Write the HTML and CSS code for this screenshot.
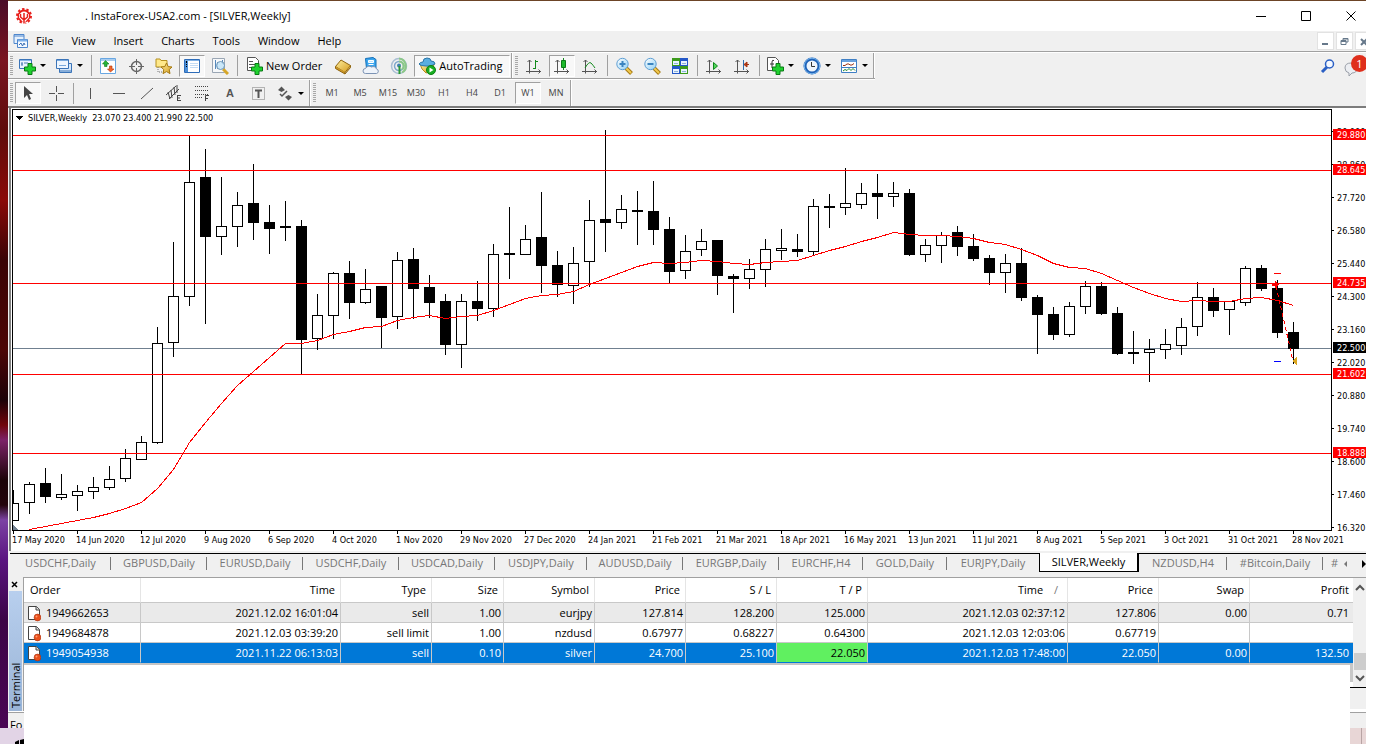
FILE: index.html
```html
<!DOCTYPE html>
<html lang="en">
<head>
<meta charset="utf-8">
<title>InstaForex-USA2.com - [SILVER,Weekly]</title>
<link rel="stylesheet" href="styles.css">
</head>
<body>
<svg class="defs" aria-hidden="true">
  <defs>
    <linearGradient id="gold" x1="0" y1="0" x2="1" y2="1"><stop offset="0" stop-color="#fff0a0"/><stop offset="1" stop-color="#d39a1c"/></linearGradient>
    <linearGradient id="lens" x1="0" y1="0" x2="1" y2="1"><stop offset="0" stop-color="#fff"/><stop offset="1" stop-color="#8fd0f5"/></linearGradient>
    <symbol id="plus" viewBox="0 0 12 12"><path d="M4 .5h4V4h3.500v4H8v3.500H4V8H.5V4H4z" fill="#1fd12f" stroke="#087a14"/></symbol>
    <symbol id="doc" viewBox="0 0 14 17"><path d="M1.500 1.500h8l3 3v10h-11z" fill="#fff" stroke="#444"/><path d="M9 1.500V5h3.500" fill="#ddd" stroke="#444"/><circle cx="10.500" cy="12.500" r="3.400" fill="#e8501c" stroke="#a82c08" stroke-width=".6"/><circle cx="9.500" cy="11.500" r="1" fill="#ff9a70"/></symbol>
    <symbol id="axes" viewBox="0 0 18 18"><path d="M4.500 3v13.500M1 14.500h15M2.500 5l2-2 2 2M13.500 12.500l2 2-2 2" fill="none" stroke="#555"/></symbol>
  </defs>
</svg>
<div class="desktop">
  <div class="wallpaper"></div>
  <main class="window">
    <header class="titlebar">
      <svg class="logo" width="16" height="16" viewBox="0 0 16 16"><g fill="none" stroke="#e8201c"><circle cx="8" cy="8" r="5.500" stroke-width="2"/><circle cx="8" cy="8" r="7" stroke-width="2" stroke-dasharray="2.400 2"/></g><path d="M8 16V5M8 13L4.500 9V6M8 13l3.500-4V6" fill="none" stroke="#fff" stroke-width="3"/><path d="M8 15.500V5M8 12L4.500 9V6M8 12l3.500-3V6" fill="none" stroke="#e8201c" stroke-width="1.500"/></svg>
      <h1 class="title">. InstaForex-USA2.com - [SILVER,Weekly]</h1>
      <div class="caption">
        <button class="cap" aria-label="Minimize"><svg width="11" height="11"><path d="M0 5.500h10" stroke="#000"/></svg></button>
        <button class="cap" aria-label="Maximize"><svg width="11" height="11"><path d="M.5.5h9v9h-9z" fill="none" stroke="#000"/></svg></button>
        <button class="cap" aria-label="Close"><svg width="11" height="11"><path d="M.5.5l9 9M9.500.5l-9 9" stroke="#000"/></svg></button>
      </div>
    </header>
    <nav class="menubar">
      <svg class="menu-icon" width="16" height="16" viewBox="0 0 16 16"><path d="M1 1.500h10v9H1zM1 3h10" fill="#e6f1fd" stroke="#4e86cc"/><path d="M4.500 6.500h10v8h-10z" fill="#f4f9ff" stroke="#4e86cc"/><path d="M5 7.500h9" stroke="#7db0ea" stroke-width="2"/><path d="M6 12l2-2 1.500 3 1.500-3 1 2" fill="none" stroke="#3a6fb5"/></svg>
      <button>File</button><button>View</button><button>Insert</button><button>Charts</button><button>Tools</button><button>Window</button><button>Help</button>
      <div class="mdi">
        <button aria-label="Minimize chart"><svg width="9" height="9"><path d="M1 7h6" stroke="#66788a" stroke-width="2"/></svg></button>
        <button aria-label="Restore chart"><svg width="9" height="9"><path d="M3 3V1.500h5v3.500H6M1 3.500h5v4H1zM1 4.500h5M3 2h5" fill="none" stroke="#66788a"/></svg></button>
        <button class="cut" aria-label="Close chart"><svg width="9" height="9"><path d="M1 2l6 6M7 2L1 8" stroke="#66788a" stroke-width="2"/></svg></button>
      </div>
    </nav>
    <div class="toolbars">
      <div class="bar">
        <i class="grip"></i>
        <button class="tool drop" aria-label="New chart"><svg width="18" height="18"><path d="M1.500 2.500h12v9h-12z" fill="#eaf4ff" stroke="#3b74b8"/><path d="M2 3.500h11" stroke="#8ab6e6"/><path d="M4 5v4M3 7h2M6 6h4" stroke="#4a7ab0"/><use href="#plus" x="6" y="6" width="12" height="12"/></svg></button>
        <button class="tool drop" aria-label="Profiles"><svg width="18" height="18"><path d="M4.500 6.500h12v9h-12z" fill="#d5e8fb" stroke="#3b74b8"/><path d="M1.500 2.500h12v9h-12z" fill="#eef6ff" stroke="#3b74b8"/><path d="M2 3.500h11M4 8.500h7" stroke="#7aaade"/><path d="M5 14h11" stroke="#3b74b8"/></svg></button>
        <i class="sep"></i>
        <button class="tool" aria-label="Market watch"><svg width="18" height="18"><path d="M1.500 1.500h15v15h-15z" fill="#fff" stroke="#69a7e2"/><path d="M2 3h14" stroke="#a9cdf0" stroke-width="2"/><path d="M6.500 3.500L3.500 7h2v2.500h2.500V7h2z" fill="#28b43a" stroke="#0b7a1a" stroke-width=".6"/><path d="M11.500 15L8.500 12h2V9h2.500v3h2z" fill="#f2672c" stroke="#b33408" stroke-width=".6"/></svg></button>
        <button class="tool" aria-label="Data window"><svg width="18" height="18"><circle cx="9.500" cy="9.500" r="5" fill="none" stroke="#666" stroke-width="1.500"/><path d="M9.500 2v6M9.500 11v6M2 9.500h6M11 9.500h6" stroke="#666"/></svg></button>
        <button class="tool" aria-label="Navigator"><svg width="18" height="18"><path d="M1 2h4l1 1.500h6V10H1z" fill="#ffe98a" stroke="#b59120"/><path d="M3 10v5h6" fill="none" stroke="#777" stroke-dasharray="1 1"/><path d="M11.500 6l1.700 3.600 3.800.4-2.800 2.600.8 4-3.500-2-3.500 2 .8-4L6 10l3.800-.4z" fill="url(#gold)" stroke="#a5780e"/></svg></button>
        <button class="tool pressed" aria-label="Terminal" aria-pressed="true"><svg width="18" height="18"><path d="M1.500 2.500h15v13h-15z" fill="#fff" stroke="#2d6cb8"/><path d="M2 3.500h14" stroke="#7fb0e4"/><path d="M2 4h3v11H2z" fill="#4c8fd8"/><path d="M3.500 4v2M3.500 7v1M3.500 9v1" stroke="#000"/><path d="M7 6.500h8M7 8.500h8M7 10.500h8" stroke="#c4dcf4"/></svg></button>
        <button class="tool" aria-label="Strategy tester"><svg width="18" height="18"><path d="M1.500 1.500h12v14h-12z" fill="#f6f8fa" stroke="#9aa6b4"/><path d="M4.500 3v9M6.500 5v7M11.500 3v4" stroke="#5588bb"/><path d="M12 12l5 5" stroke="#d6a628" stroke-width="3"/><circle cx="9.500" cy="8.500" r="4" fill="#bfe2f7" fill-opacity=".8" stroke="#7096b6"/></svg></button>
        <i class="sep"></i>
        <button class="tool labelled"><svg width="18" height="18"><path d="M2.500.5h8l3 3v10h-11z" fill="#fff" stroke="#555"/><path d="M4 4.500h4M4 7.500h7M4 10.500h5" stroke="#555"/><use href="#plus" x="6" y="6" width="12" height="12"/></svg>New Order</button>
        <button class="tool" aria-label="MetaEditor"><svg width="18" height="18"><path d="M1.500 9.500L7 3l9.500 5.500L11 15.500z" fill="url(#gold)" stroke="#8f6510"/><path d="M1.500 9.500v2L11 17v-2M11 17l5.500-6.500v-2" fill="#d09a28" stroke="#8f6510"/></svg></button>
        <button class="tool" aria-label="Virtual hosting"><svg width="18" height="18"><path d="M3.500 1.500L11 .5l3 2v9H4.500z" fill="#3aa5ee" stroke="#1470b8"/><path d="M6.500 3.500h5v2h-5zM6.500 7.500h5" fill="#bfe4fb" stroke="#fff"/><path d="M3.500 16.500a2.500 2.500 0 010-5 4 4 0 016-1.500 3.500 3.500 0 015 2 2.300 2.300 0 010 4.500z" fill="#eef3fa" stroke="#7c93b4"/></svg></button>
        <button class="tool" aria-label="Signals"><svg width="18" height="18"><g fill="none"><circle cx="9" cy="9" r="7.500" stroke="#a9bfd4" stroke-width="1.500"/><circle cx="9" cy="9" r="4.500" stroke="#7fa8cc" stroke-width="1.500"/><path d="M9 1.500a7.500 7.500 0 013 14M9 4.500a4.500 4.500 0 013 8" stroke="#8cc888" stroke-width="2"/></g><circle cx="9" cy="8.500" r="2" fill="#3f81ac"/><path d="M9.500 9v8" stroke="#2c9a34" stroke-width="2"/></svg></button>
        <button class="tool labelled pressed" aria-pressed="true"><svg width="18" height="18"><path d="M2 7h14l-2 7-6 2-4-4z" fill="url(#gold)" stroke="#b78c1c"/><path d="M1 7q1-2 4-2 0-4 4-4t4 3q4 0 4 3-4 3-9 2Q2 9 1 7z" fill="#5aaee0" stroke="#2b76a8"/><circle cx="13" cy="13" r="4.500" fill="#19ae22" stroke="#0c8014"/><path d="M11.500 10.500l4 2.500-4 2.500z" fill="#fff"/></svg>AutoTrading</button>
        <i class="end"></i><i class="grip"></i>
        <button class="tool" aria-label="Bar chart"><svg width="18" height="18"><use href="#axes" width="18" height="18"/><path d="M10.500 3v9M8 11.500h2.500M10.500 4.500H13" stroke="#128a1c" fill="none"/></svg></button>
        <button class="tool pressed" aria-label="Candlesticks" aria-pressed="true"><svg width="18" height="18"><use href="#axes" width="18" height="18"/><path d="M10.500 1v12" stroke="#128a1c"/><path d="M8.500 3.500h4v7h-4z" fill="#1cb92a" stroke="#0b7a16"/></svg></button>
        <button class="tool" aria-label="Line chart"><svg width="18" height="18"><use href="#axes" width="18" height="18"/><path d="M4 11q4-7 6-5t4 5" stroke="#128a1c" fill="none"/></svg></button>
        <i class="sep"></i>
        <button class="tool" aria-label="Zoom in"><svg width="18" height="18"><path d="M11 11l5.500 5.500" stroke="#a87c14" stroke-width="4"/><path d="M11 11l5 5" stroke="#f2ca50" stroke-width="2"/><circle cx="7.500" cy="7" r="5.700" fill="url(#lens)" stroke="#5f9fd4"/><path d="M4.500 7h6M7.500 4v6" stroke="#3a84c0" stroke-width="2"/></svg></button>
        <button class="tool" aria-label="Zoom out"><svg width="18" height="18"><path d="M11 11l5.500 5.500" stroke="#a87c14" stroke-width="4"/><path d="M11 11l5 5" stroke="#f2ca50" stroke-width="2"/><circle cx="7.500" cy="7" r="5.700" fill="url(#lens)" stroke="#5f9fd4"/><path d="M4.500 7h6" stroke="#3a84c0" stroke-width="2"/></svg></button>
        <button class="tool" aria-label="Tile windows"><svg width="18" height="18"><path d="M1 1h8v8H1zM9 9h8v8H9z" fill="#3c9a1c"/><path d="M9 1h8v8H9zM1 9h8v8H1z" fill="#2458c8"/><path d="M2 4h6v4H2zM10 4h6v4h-6zM2 12h6v4H2zM10 12h6v4h-6z" fill="#e8f2ff"/><path d="M3 6.500h4M11 6.500h4M3 14.500h4M11 14.500h4" stroke="#8db4d8"/></svg></button>
        <i class="sep"></i>
        <button class="tool" aria-label="Auto scroll"><svg width="18" height="18"><use href="#axes" width="18" height="18"/><path d="M8.500 5.500l4 3.500-4 3.500z" fill="#52d45c" stroke="#0e8a1a"/></svg></button>
        <button class="tool" aria-label="Chart shift"><svg width="18" height="18"><use href="#axes" width="18" height="18"/><path d="M10.500 3v10" stroke="#2f6cab"/><path d="M16 7.500h-3M14 5l-3 2.500 3 2.500z" fill="#c43c14" stroke="#a03010"/></svg></button>
        <i class="sep"></i>
        <button class="tool drop" aria-label="Indicators"><svg width="18" height="18"><path d="M1.500.5h8l3 3v10h-11z" fill="#fff" stroke="#555"/><path d="M8 3.500q-2-1-2 1.500v6M4 7h4" fill="none" stroke="#333"/><use href="#plus" x="6" y="6" width="12" height="12"/></svg></button>
        <button class="tool drop" aria-label="Periods"><svg width="18" height="18"><circle cx="9" cy="9" r="7" fill="#eef4fb" stroke="#1f62b8" stroke-width="3"/><circle cx="9" cy="9" r="7.800" fill="none" stroke="#7ab6ec"/><path d="M8.500 5v4.500H12" fill="none" stroke="#333"/></svg></button>
        <button class="tool drop" aria-label="Templates"><svg width="18" height="18"><path d="M1.500 2.500h15v13h-15z" fill="#fff" stroke="#3f7fc4"/><path d="M2 4h14" stroke="#69a2de" stroke-width="2"/><path d="M3 8.500h2l2-1.500h2l1 1h2l2-1.500" fill="none" stroke="#9a3214"/><path d="M2 10.500h14" stroke="#3f7fc4"/><path d="M3 14l2-1.500 2 1 2-2 2 2 2-2 2 2" fill="none" stroke="#208a30"/></svg></button>
        <i class="end"></i>
      </div>
      <div class="bar">
        <i class="grip"></i>
        <button class="tool pressed" aria-label="Cursor" aria-pressed="true"><svg width="18" height="18"><path d="M5 2v12l3-3 2 5 2-1-2-5h4z" fill="#444"/></svg></button>
        <button class="tool" aria-label="Crosshair"><svg width="18" height="18"><path d="M9.500 2v6M9.500 11v6M2 9.500h6M11 9.500h6" stroke="#555"/></svg></button>
        <i class="sep"></i>
        <button class="tool" aria-label="Vertical line"><svg width="18" height="18"><path d="M9.500 4v11" stroke="#555"/></svg></button>
        <button class="tool" aria-label="Horizontal line"><svg width="18" height="18"><path d="M4 9.500h12" stroke="#555"/></svg></button>
        <button class="tool" aria-label="Trendline"><svg width="18" height="18"><path d="M4 15L16 4" stroke="#555"/></svg></button>
        <button class="tool" aria-label="Equidistant channel"><svg width="18" height="18"><path d="M1 11L11 2M4 15L14 5M3 8l2 7M6 6l1 8M9 3l1 8M12 1v8" stroke="#444"/><path d="M12.500 11.500v5M12 11.500h4M12 14h3M12 16.500h4" stroke="#444"/></svg></button>
        <button class="tool" aria-label="Fibonacci retracement"><svg width="18" height="18"><path d="M2 2.500h13M2 6.500h13M2 10.500h13M2 13.500h8" stroke="#444" stroke-dasharray="1 1"/><path d="M12.500 17v-5.500H16M12 14.500h3" fill="none" stroke="#444"/></svg></button>
        <button class="tool glyph">A</button>
        <button class="tool" aria-label="Text label"><svg width="18" height="18"><path d="M3.500 3.500h12v12h-12z" fill="none" stroke="#777" stroke-dasharray="1 1"/><path d="M6 6.500h7M9.500 6v8" stroke="#555" stroke-width="2"/></svg></button>
        <button class="tool drop" aria-label="Arrows"><svg width="18" height="18"><path d="M2 6l3.500-3.500L9 6 5.500 8zM9 13l3.500-2 3.500 2-3.500 3.500z" fill="#555"/><path d="M4 10l2 2 5-5" fill="none" stroke="#555" stroke-width="1.500"/></svg></button>
        <i class="end"></i><i class="grip"></i>
        <button class="tool tf">M1</button><button class="tool tf">M5</button><button class="tool tf">M15</button><button class="tool tf">M30</button><button class="tool tf">H1</button><button class="tool tf">H4</button><button class="tool tf">D1</button><button class="tool tf pressed" aria-pressed="true">W1</button><button class="tool tf">MN</button>
        <i class="end"></i>
      </div>
      <div class="notify">
        <button aria-label="Search"><svg width="16" height="16"><path d="M7 9l-5 5" stroke="#2a5fc4" stroke-width="3"/><circle cx="9.500" cy="6" r="4" fill="#f4f8ff" stroke="#2a5fc4" stroke-width="1.500"/></svg></button>
        <button class="chat" aria-label="Messages"><svg width="22" height="22"><path d="M1 13q0-5 6-5t6 5-5 5l-3 3v-3q-4-1-4-5z" fill="#eceef2" stroke="#9a9fa8"/></svg><span class="badge">1</span></button>
      </div>
    </div>
    <section class="chart" aria-label="SILVER weekly chart">
      <svg class="plot" id="plot" height="422"></svg>
      <svg class="prices" id="prices" height="422"></svg>
      <svg class="times" id="times" height="20"></svg>
    </section>
    <nav class="tabs">
      <button class="w100">USDCHF,Daily</button><button class="w96">GBPUSD,Daily</button><button class="w96">EURUSD,Daily</button><button class="w96">USDCHF,Daily</button><button class="w96">USDCAD,Daily</button><button class="w92">USDJPY,Daily</button><button class="w96">AUDUSD,Daily</button><button class="w96">EURGBP,Daily</button><button class="w84">EURCHF,H4</button><button class="w84">GOLD,Daily</button><button class="w92 last">EURJPY,Daily</button><button class="w100 active">SILVER,Weekly</button><button class="w88">NZDUSD,H4</button><button class="w96">#Bitcoin,Daily</button><button class="more">#</button>
      <span class="scroll"><button aria-label="Previous tabs"><svg width="5" height="8"><path d="M4 1v6L1 4z" fill="#777"/></svg></button><button aria-label="Next tabs"><svg width="5" height="8"><path d="M1 0v8l4-4z" fill="#000"/></svg></button></span>
    </nav>
    <section class="terminal">
      <aside class="side">
        <button class="side-close" aria-label="Close terminal"><svg width="8" height="8"><path d="M1 1l5 5M6 1L1 6" stroke="#000" stroke-width="1.500"/></svg></button>
        <span class="side-label">Terminal</span>
      </aside>
      <div class="orders">
        <table>
          <colgroup><col class="c-order"><col><col class="c-mid"><col class="c-size"><col class="c-mid"><col class="c-mid"><col class="c-mid"><col class="c-mid"><col><col class="c-mid"><col class="c-mid"><col class="c-profit"></colgroup>
          <thead><tr><th class="first">Order</th><th>Time</th><th>Type</th><th>Size</th><th>Symbol</th><th>Price</th><th>S / L</th><th>T / P</th><th>Time <span class="sort">/</span></th><th>Price</th><th>Swap</th><th>Profit</th></tr></thead>
          <tbody>
            <tr class="odd"><td class="first"><svg width="14" height="17"><use href="#doc"/></svg>1949662653</td><td>2021.12.02 16:01:04</td><td>sell</td><td>1.00</td><td>eurjpy</td><td>127.814</td><td>128.200</td><td>125.000</td><td>2021.12.03 02:37:12</td><td>127.806</td><td>0.00</td><td>0.71</td></tr>
            <tr><td class="first"><svg width="14" height="17"><use href="#doc"/></svg>1949684878</td><td>2021.12.03 03:39:20</td><td>sell limit</td><td>1.00</td><td>nzdusd</td><td>0.67977</td><td>0.68227</td><td>0.64300</td><td>2021.12.03 12:03:06</td><td>0.67719</td><td></td><td></td></tr>
            <tr class="selected"><td class="first"><svg width="14" height="17"><use href="#doc"/></svg>1949054938</td><td>2021.11.22 06:13:03</td><td>sell</td><td>0.10</td><td>silver</td><td>24.700</td><td>25.100</td><td class="hit">22.050</td><td>2021.12.03 17:48:00</td><td>22.050</td><td>0.00</td><td>132.50</td></tr>
          </tbody>
        </table>
        <i class="stub"></i>
      </div>
      <div class="scrollbar">
        <svg width="12" height="20"><path d="M2 12l4-4 4 4" fill="none" stroke="#555" stroke-width="2"/></svg>
        <i class="thumb"></i>
        <svg width="12" height="17"><path d="M2 6l4 4 4-4" fill="none" stroke="#555" stroke-width="2"/></svg>
        <i class="foot"></i>
      </div>
    </section>
    <footer class="status"><span class="help">Fo</span><span class="blank"></span><span class="tail"></span></footer>
  </main>
</div>
<div class="taskbar"><span class="start"><svg width="9" height="5"><path d="M0 3l4-2v4H0zM5 1l4-1v5H5z" fill="#000"/></svg></span><span class="blank"></span><span class="tray"></span></div>
<script src="chart.js"></script>
</body>
</html>
```
FILE: styles.css
```css
* { box-sizing: border-box; }
body {
  margin: 0;
  height: 100vh;
  display: flex;
  flex-direction: column;
  overflow: hidden;
  background: #fff;
  color: #000;
  font: 11px/16px "Open Sans", "Noto Sans", sans-serif;
}
button {
  margin: 0;
  padding: 0;
  border: 0;
  background: none;
  color: inherit;
  font: inherit;
}
svg { display: block; flex: none; }
.defs { position: absolute; width: 0; height: 0; }

.desktop { flex: 1; min-height: 0; display: flex; padding-right: 16px; }
.wallpaper {
  width: 8px;
  background: linear-gradient(#4a0c28 0, #7a1420 60px, #5e0c0c 130px, #8a0a08 200px, #3a0406 260px, #4c0606 350px, #1c0208 400px, #70060c 425px, #7c2268 440px, #1c0308 480px, #24040c 505px, #7c42a4 520px, #5a1480 560px, #3c0446 620px, #4a0654 728px);
}
.window {
  flex: 1;
  min-width: 0;
  display: flex;
  flex-direction: column;
  background: #f0f0f0;
  border-top: 1px solid #6c4426;
}

.titlebar { display: flex; align-items: center; height: 30px; padding: 0 9px 0 8px; background: #fff; }
.title { flex: 1; margin: 0 0 0 53px; font-size: 11px; font-weight: 400; white-space: nowrap; }
.caption { display: flex; gap: 34px; }
.cap { width: 11px; height: 11px; }

.menubar { display: flex; align-items: center; height: 21px; gap: 18px; padding-left: 5px; border-bottom: 1px solid #a0a0a0; overflow: hidden; }
.menu-icon { margin-right: -11px; }
.mdi { display: flex; gap: 2px; margin-left: auto; }
.mdi button { display: grid; place-items: center; width: 17px; height: 18px; background: #fff; border: 1px solid #e2e2e2; }
.mdi .cut { width: 11px; border-right: 0; overflow: hidden; justify-content: start; padding-left: 4px; }

.toolbars { position: relative; border-top: 1px solid #fff; border-bottom: 2px solid #7c7c7c; }
.bar { display: flex; align-items: center; width: max-content; height: 26px; }
.bar:first-child { border-bottom: 1px solid #a0a0a0; box-shadow: 0 1px #fff; }
.bar + .bar { margin-top: 1px; }
.grip { width: 3px; height: 20px; margin: 0 1px 0 2px; background: repeating-linear-gradient(#a8a8a8 0 1px, #f0f0f0 1px 2px); }
.end + .grip { margin-right: 2px; }
.sep { width: 6px; height: 21px; background: linear-gradient(90deg, transparent 3px, #a0a0a0 3px 4px, transparent 4px); }
.end { align-self: stretch; width: 2px; background: linear-gradient(90deg, #a0a0a0 1px, #fff 1px); }
.tool { display: flex; align-items: center; justify-content: center; width: 28px; height: 22px; color: #000; white-space: nowrap; }
.pressed { border: 1px solid #fff; border-top-color: #a0a0a0; border-left-color: #a0a0a0; background: #f8f8f8; width: 26px; margin: 0 1px; }
.drop { width: 37px; gap: 4px; justify-content: flex-start; padding-left: 4px; }
.drop::after { content: ""; border: 3px solid transparent; border-top-color: #000; border-bottom: 0; }
.labelled { width: auto; gap: 3px; padding: 0 7px 0 5px; }
.labelled.pressed { width: auto; padding: 0 7px 0 3px; }
.glyph { font: bold 11px/16px "Liberation Sans", sans-serif; color: #555; }
.tf { font-size: 9px; color: #444; }
.notify { position: absolute; top: 2px; right: 0; display: flex; gap: 8px; align-items: center; overflow: hidden; }
.chat { position: relative; width: 22px; height: 22px; }
.badge { position: absolute; top: 0; left: 7px; width: 17px; height: 17px; border-radius: 50%; background: #df2f1c; color: #fff; line-height: 17px; text-align: center; }

.chart {
  display: grid;
  grid-template-columns: minmax(0, 1fr) 34px;
  margin-left: 1px;
  padding: 1px 0 0 1px;
  border-left: 2px solid #808080;
  background: #fff;
}
.plot, .prices, .times { width: 100%; font: 9px "DejaVu Sans Condensed", "Open Sans", sans-serif; }
.times { grid-column: 1 / -1; overflow: visible; }
.prices { overflow: visible; }
.line { shape-rendering: crispEdges; }

.tabs { display: flex; height: 20px; margin: 2px 0 0 2px; border-top: 1px solid #000; color: #777; }
.tabs > button { flex: 0 1 auto; min-width: 0; height: 18px; white-space: nowrap; }
.tabs > button:not(.active):not(.last):not(.more) { background: linear-gradient(#777, #777) right 3px / 1px 13px no-repeat; }
.w100 { width: 101px; }
.w96 { width: 96px; }
.w92 { width: 92px; }
.w88 { width: 88px; }
.w84 { width: 84px; }
.tabs > .active { width: 100px; margin-top: -1px; height: 19px; background: #fff; border: 1px solid #000; border-top: 0; border-right-width: 2px; color: #000; }
.more { width: 8px; margin-left: 8px; text-align: left; }
.scroll { display: flex; gap: 13px; align-items: center; margin-left: auto; }

.terminal { flex: 1; min-height: 0; display: flex; margin-top: 4px; border-bottom: 1px solid #fff; }
.side { display: flex; flex-direction: column; width: 15px; padding: 2px 1px 0 1px; }
.side-close { height: 12px; padding-left: 2px; }
.side-label { flex: 1; writing-mode: vertical-rl; transform: rotate(180deg); line-height: 13px; padding-top: 3px; background: linear-gradient(#9ab4d6, #b8cfee); text-align: left; }
.orders { position: relative; flex: 1; min-width: 0; background: #fff; border: 1px solid #a0a0a0; border-width: 1px 0 0 1px; }
.stub { position: absolute; right: 0; top: 87px; width: 3px; height: 17px; background: #c8c8c8; }
table { width: 100%; table-layout: fixed; border-collapse: separate; border-spacing: 0; border-bottom: 2px solid #c4c4c4; }
.c-order { width: 117px; }
.c-mid { width: 91px; }
.c-size { width: 72px; }
.c-profit { width: 103px; }
th, td { padding: 0 2px 0 0; border-right: 1px solid #c8c8c8; border-bottom: 1px solid #c8c8c8; text-align: right; white-space: nowrap; font-weight: 400; }
th { height: 25px; padding-right: 5px; border-right-color: #e5e5e5; }
td { height: 20px; line-height: 18px; }
th.first, td.first { text-align: left; padding-left: 6px; }
td.first { padding-left: 3px; }
td svg { display: inline-block; vertical-align: middle; margin: -3px 5px -2px 0; }
td:last-child, th:last-child { border-right: 0; padding-right: 4px; }
.sort { margin: 0 4px 0 8px; color: #777; }
.odd td { background: #eaeaea; }
.selected td { background: #0078d7; color: #fff; border-bottom-color: #0078d7; }
.selected .hit { background: #60f060; color: #000; }
.scrollbar { display: flex; flex-direction: column; width: 13px; border-top: 1px solid #a0a0a0; padding-left: 1px; }
.thumb { height: 17px; margin-top: 55px; background: #cdcdcd; }
.foot { flex: 1; margin-left: -4px; background: #f0f0f0; border-top: 1px solid #000; border-bottom: 2px solid #fff; z-index: 1; }

.status { display: flex; height: 16px; overflow: hidden; }
.help { width: 16px; padding: 4px 0 0 2px; overflow: hidden; border-top: 1px solid #a0a0a0; }
.blank { flex: 1; background: #fff; }
.tail { width: 16px; border-top: 1px solid #a0a0a0; }
.taskbar { display: flex; height: 16px; padding-right: 16px; }
.start { width: 24px; padding: 11px 0 0 15px; background: #e2d4e6; }
.tray { width: 16px; background: linear-gradient(90deg, #e8d6d6 11px, #b8a4a4 11px 12px, #e8d6d6 12px); }
```
FILE: chart.js
```js
const NS = "http://www.w3.org/2000/svg";
const plot = document.getElementById("plot");
const prices = document.getElementById("prices");
const times = document.getElementById("times");

function add(parent, name, attrs, text) {
  const el = document.createElementNS(NS, name);
  for (const key in attrs) el.setAttribute(key, attrs[key]);
  if (text) el.textContent = text;
  parent.appendChild(el);
  return el;
}

// [high, body top, body bottom, low, rising]
const candles = [
  [490,503,520,521,1],[482,484,502,514,1],[468,483,497,503,0],[474,494,497,500,1],[485,491,495,511,1],[477,487,491,499,1],[466,479,487,490,1],[449,458,478,482,1],[436,442,459,460,1],
  [327,343,442,444,1],[242,296,342,357,1],[135,182,296,306,1],[149,177,237,324,0],[177,226,236,255,1],[192,205,226,247,1],[164,203,223,240,0],[205,222,229,254,0],[201,226,228,241,0],[220,226,340,374,0],
  [294,315,338,350,1],[272,273,315,339,1],[261,273,303,319,0],[269,289,302,304,1],[286,286,318,348,0],[252,260,316,329,1],[248,259,289,319,0],[275,287,303,318,0],[294,301,345,355,0],[294,301,344,368,1],
  [281,301,309,321,0],[244,254,308,317,1],[207,253,255,279,0],[225,239,254,255,1],[192,237,266,293,0],[251,265,285,297,0],[247,263,285,304,1],[200,220,261,287,1],[130,219,223,252,0],[195,209,222,229,1],
  [191,210,212,245,0],[181,211,230,245,0],[217,229,272,283,0],[235,251,270,279,1],[229,241,249,256,1],[240,240,276,295,0],[274,276,279,313,0],[259,269,278,289,1],[239,249,269,287,1],[229,248,250,260,1],
  [234,249,252,257,0],[199,206,251,255,1],[194,206,208,228,0],[168,203,207,215,1],[183,193,204,209,1],[174,193,197,219,0],[182,193,196,207,1],[189,193,255,256,0],[239,245,254,262,1],[232,235,245,263,1],
  [226,232,247,256,0],[234,246,259,261,0],[255,258,273,285,0],[254,263,272,293,1],[248,263,298,301,0],[295,297,315,354,0],[307,314,335,340,0],[302,306,334,337,1],[281,286,306,314,1],[282,286,314,315,0],
  [307,313,354,355,0],[331,352,354,364,0],[339,349,352,382,1],[329,344,349,359,1],[318,327,345,355,1],[282,297,326,336,1],[288,297,311,317,0],[301,301,309,335,1],[266,268,302,306,1],[265,268,289,291,0],
  [280,288,333,338,0],[322,332,349,364,0]
];

// Moving average, one value per candle from the second one on
const average = [529,526,523,520,517,513,508,502,488,469,442,422,403,385,371,357,343,343,340,334,331,327,326,320,317,315,318,316,315,310,304,298,295,294,291,284,278,272,266,262,263,262,260,261,263,264,262,261,260,255,250,246,241,237,232,234,235,235,236,238,242,244,249,255,263,267,268,273,280,287,293,298,301,300,301,301,298,297,300,305];

const g = add(plot, "g", { transform: "translate(-12 -109)", class: "line" });
const black = "#000", red = "#f00";

add(g, "rect", { x: 12, y: 348, width: "100%", height: 1, fill: "#708090" });
candles.forEach(([high, top, bottom, low, rising], i) => {
  const x = 13 + 16 * i;
  add(g, "rect", { x, y: high, width: 1, height: low - high, fill: black });
  if (rising) add(g, "rect", { x: x - 4.5, y: top + 0.5, width: 10, height: bottom - top, fill: "#fff", stroke: black });
  else add(g, "rect", { x: x - 5, y: top, width: 11, height: bottom - top, fill: black });
});
for (const y of [135, 170, 283, 374, 453]) add(g, "rect", { x: 12, y, width: "100%", height: 1, fill: red });
add(g, "polyline", { points: average.map((y, i) => `${29.5 + 16 * i},${y + 0.5}`).join(" "), fill: "none", stroke: red });

// Closed trade: entry, exit and its stop levels
add(g, "path", { d: "M1276 286L1293 361", stroke: red, "stroke-dasharray": "4 3" });
add(g, "path", { d: "M1272 283h3v-3l4 4.500-4 4v-3h-3z", fill: red });
add(g, "path", { d: "M1297 357v8l-5-4z", fill: "#daa520" });
add(g, "rect", { x: 1274, y: 273, width: 7, height: 1, fill: red });
add(g, "rect", { x: 1274, y: 361, width: 7, height: 1, fill: "#00f" });
add(g, "path", { d: "M13 525l5 5h-5z", fill: "#708090" });
add(g, "path", { d: "M16 116h7l-3.500 4z", fill: black });
add(plot, "text", { x: 16, y: 12 }, "SILVER,Weekly\u00a0 23.070 23.400 21.990 22.500");

// Frame
add(plot, "rect", { width: "100%", height: 1, fill: black });
add(plot, "rect", { y: 421, width: "100%", height: 1, fill: black });
add(plot, "rect", { width: 1, height: "100%", fill: black });
add(plot, "rect", { x: "100%", width: 1, height: "100%", fill: black, transform: "translate(-1 0)" });

// Price scale
["30.000", "28.860", "27.720", "26.580", "25.440", "24.300", "23.160", "22.020", "20.880", "19.740", "18.600", "17.460", "16.320"].forEach((label, i) => {
  const y = 22 + 33 * i;
  add(prices, "rect", { y, width: 2, height: 1, fill: black });
  add(prices, "text", { x: 5, y: y + 4 }, label);
});
[["29.880", 135, red], ["28.645", 170, red], ["24.735", 283, red], ["22.500", 348, black], ["21.602", 374, red], ["18.888", 453, red]].forEach(([label, y, fill]) => {
  add(prices, "rect", { x: 1, y: y - 115, width: 33, height: 11, fill });
  add(prices, "text", { x: 5, y: y - 106, fill: "#fff" }, label);
});

// Time scale
["17 May 2020", "14 Jun 2020", "12 Jul 2020", "9 Aug 2020", "6 Sep 2020", "4 Oct 2020", "1 Nov 2020", "29 Nov 2020", "27 Dec 2020", "24 Jan 2021", "21 Feb 2021", "21 Mar 2021", "18 Apr 2021", "16 May 2021", "13 Jun 2021", "11 Jul 2021", "8 Aug 2021", "5 Sep 2021", "3 Oct 2021", "31 Oct 2021", "28 Nov 2021"].forEach((label, i) => {
  add(times, "rect", { x: 1 + 64 * i, width: 1, height: 3, fill: black });
  add(times, "text", { x: 64 * i, y: 12 }, label);
});
```
